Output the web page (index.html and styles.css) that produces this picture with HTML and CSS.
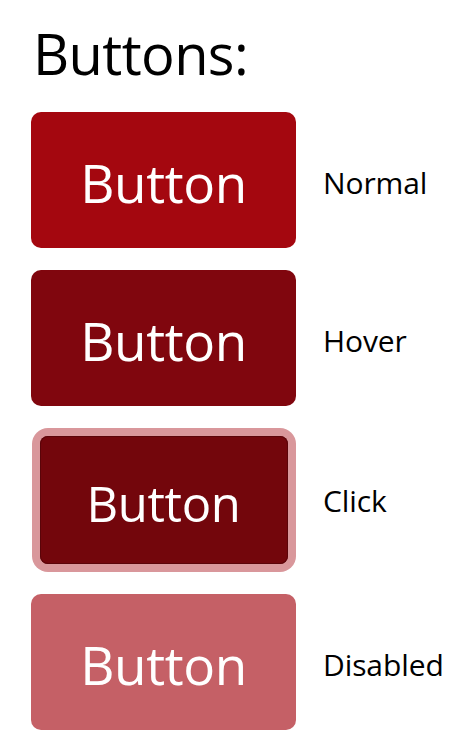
FILE: index.html
```html
<!DOCTYPE html>
<html>
<head>
<meta charset="utf-8">
<link rel="stylesheet" href="styles.css">
</head>
<body>
<main class="page">
  <h1 class="title">Buttons:</h1>
  <div class="list">
    <div class="row">
      <button class="btn btn-normal">Button</button>
      <span class="label">Normal</span>
    </div>
    <div class="row">
      <button class="btn btn-hover">Button</button>
      <span class="label">Hover</span>
    </div>
    <div class="row">
      <button class="btn btn-click">Button</button>
      <span class="label label-click">Click</span>
    </div>
    <div class="row">
      <button class="btn btn-disabled" disabled>Button</button>
      <span class="label">Disabled</span>
    </div>
  </div>
</main>
</body>
</html>
```

FILE: styles.css
```css
html, body {
  margin: 0;
  padding: 0;
  background: #ffffff;
}

.page {
  padding: 25px 0 0 31px;
  font-family: "Open Sans", "Noto Sans", sans-serif;
  color: #000000;
}

.title {
  margin: 0 0 31px 2px;
  font-size: 56px;
  font-weight: 400;
  line-height: 1;
  letter-spacing: -0.6px;
}

.list {
  display: flex;
  flex-direction: column;
  gap: 22px;
}

.row {
  display: grid;
  grid-template-columns: 265px auto;
  column-gap: 27px;
  align-items: center;
}

.btn {
  justify-self: center;
  box-sizing: border-box;
  width: 265px;
  height: 136px;
  border: none;
  border-radius: 10px;
  padding: 5px 0 0;
  font-family: "Open Sans", "Noto Sans", sans-serif;
  font-size: 53px;
  font-weight: 400;
  color: #ffffff;
  display: flex;
  align-items: center;
  justify-content: center;
  letter-spacing: -0.4px;
}

.btn-normal {
  background: #a4070f;
}

.btn-hover {
  background: #80060e;
}

.btn-click {
  width: 248px;
  height: 128px;
  margin: 8px 0;
  border-radius: 8px;
  background: #73060c;
  box-shadow: 0 0 0 8px #d9979b, inset 0 0 0 1px #5a0409;
  font-size: 49px;
  padding-top: 6px;
}

.btn-disabled {
  background: #c56066;
}

.label {
  font-size: 30px;
  padding-top: 5px;
  letter-spacing: -0.1px;
}

.label-click {
  padding-top: 0;
}
```
